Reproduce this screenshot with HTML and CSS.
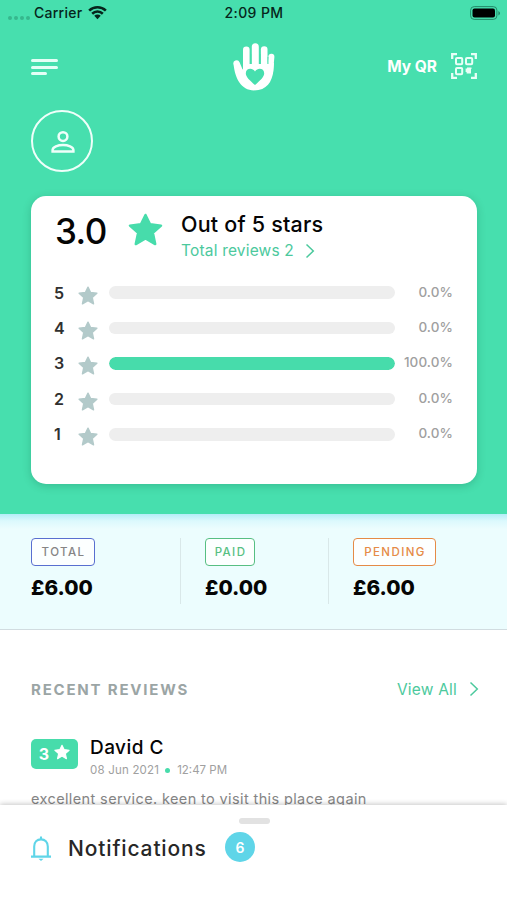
FILE: index.html
```html
<!DOCTYPE html>
<html lang="en">
<head>
<meta charset="utf-8">
<title>Reviews</title>
<link rel="stylesheet" href="styles.css">
</head>
<body>
<svg class="defs" aria-hidden="true">
  <symbol id="star" viewBox="0 0 36 34"><path d="M18 2 22.7 11.6 34 13 25.6 20.4 28 32 18 26.3 8 32 10.4 20.4 2 13 13.3 11.6Z" fill="currentColor" stroke="currentColor" stroke-width="2.5" stroke-linejoin="round"/></symbol>
  <symbol id="chevron" viewBox="0 0 10 16"><path d="M1.5 1.5 8.3 8 1.5 14.5" fill="none" stroke="currentColor" stroke-width="1.5"/></symbol>
</svg>
<main class="screen">
  <section class="hero">
    <div class="status">
      <div class="signal"><i></i><i></i><i></i><i></i></div>
      <span class="carrier">Carrier</span>
      <svg class="wifi" viewBox="0 0 20 15"><path d="M1.2 5.6a12.6 12.6 0 0 1 17.6 0M4.4 8.8a8 8 0 0 1 11.2 0" fill="none" stroke="#06251b" stroke-width="2.7"/><path d="M6.6 11a4.9 4.9 0 0 1 6.8 0L10 14.6Z" fill="#06251b"/></svg>
      <span class="time">2:09 PM</span>
      <svg class="battery" viewBox="0 0 31 14"><rect x=".6" y=".6" width="26.3" height="12.8" rx="3.6" fill="none" stroke="#238b69"/><rect x="2.5" y="2.5" width="22.5" height="9" rx="2" fill="#000"/><path d="M28.4 5v4.4q1.6-.8 1.6-2.2T28.4 5Z" fill="#238b69"/></svg>
    </div>
    <header class="header">
      <div class="menu"><i></i><i></i><i></i></div>
      <svg class="hand" viewBox="0 0 42 48">
        <g stroke="#fff" stroke-linecap="round" fill="none"><path d="M13.3 6.8V26" stroke-width="6.6"/><path d="M22.3 3.8V26" stroke-width="7"/><path d="M31.2 6.6V26" stroke-width="6.6"/><path d="M38.4 13.8 37 29" stroke-width="6"/><path d="M3.6 20.5 8 31" stroke-width="6.4"/></g>
        <path d="M.6 21.5C2 35 8 47.4 21 47.4S38.9 38.8 40.4 28L41 20 34 21H10.5V27Z" fill="#fff"/>
        <path d="M22 42C17 37.5 12.8 34 12.8 30.2 12.8 25.2 19.4 24.4 22 28.4 24.6 24.4 31.2 25.2 31.2 30.2 31.2 34 27 37.5 22 42Z" fill="#47dfae"/>
        <path d="M17.7 11V21M27.1 11V21M35 14V21" stroke="#47dfae" stroke-width=".9"/>
      </svg>
      <div class="myqr"><span class="myqr-text">My QR</span>
        <svg class="qr" viewBox="0 0 26 26" fill="none" stroke="#e9fff7"><path d="M1.2 6V1.2H6M20 1.2H24.8V6M24.8 20V24.8H20M6 24.8H1.2V20" stroke-width="2.3"/><g stroke-width="2"><rect x="5" y="5" width="6.2" height="6.2" rx="1"/><rect x="15" y="5" width="6.2" height="6.2" rx="1"/><rect x="5" y="15" width="6.2" height="6.2" rx="1"/></g><path d="M14.6 15.4H16V14.4H20.5V16H20V20.4H15.6V19H14.6Z" fill="#e9fff7" stroke="none"/></svg>
      </div>
    </header>
    <div class="avatar"><svg viewBox="0 0 24 24"><circle cx="12" cy="6.6" r="4.4"/><path d="M1.6 21.6V20C1.6 16.8 7 15 12 15S22.4 16.8 22.4 20V21.6Z"/></svg></div>
    <div class="card">
      <div class="summary">
        <span class="score">3.0</span>
        <svg class="big-star"><use href="#star"/></svg>
        <div class="summary-text">
          <div class="out-of">Out of 5 stars</div>
          <div class="total"><span>Total reviews 2</span><svg class="chevron"><use href="#chevron"/></svg></div>
        </div>
      </div>
      <div class="bars">
        <div class="row"><b>5</b><svg><use href="#star"/></svg><div class="track"></div><span>0.0%</span></div>
        <div class="row"><b>4</b><svg><use href="#star"/></svg><div class="track"></div><span>0.0%</span></div>
        <div class="row"><b>3</b><svg><use href="#star"/></svg><div class="track"><div class="fill" style="width:100%"></div></div><span>100.0%</span></div>
        <div class="row"><b>2</b><svg><use href="#star"/></svg><div class="track"></div><span>0.0%</span></div>
        <div class="row"><b>1</b><svg><use href="#star"/></svg><div class="track"></div><span>0.0%</span></div>
      </div>
    </div>
  </section>
  <section class="stats">
    <div class="stat"><span class="tag tag-total">TOTAL</span><div class="amount">£6.00</div></div>
    <div class="stat"><span class="tag tag-paid">PAID</span><div class="amount">£0.00</div></div>
    <div class="stat"><span class="tag tag-pending">PENDING</span><div class="amount">£6.00</div></div>
  </section>
  <section class="recent">
    <div class="recent-head"><h2>RECENT REVIEWS</h2><div class="view-all"><span>View All</span><svg class="chevron"><use href="#chevron"/></svg></div></div>
    <article class="review">
      <div class="badge"><span>3</span><svg><use href="#star"/></svg></div>
      <div><div class="name">David C</div><div class="meta"><span class="date">08 Jun 2021</span><i></i><span class="hour">12:47 PM</span></div></div>
    </article>
    <p class="comment">excellent service. keen to visit this place again</p>
  </section>
  <section class="sheet">
    <div class="handle"></div>
    <div class="notice">
      <svg class="bell" viewBox="0 0 20 25" fill="none" stroke="#5fd5e8" stroke-width="2.1"><path d="M0 20.6H20M3.2 20.5V10.5C3.2 6 6 3.4 10 3.4S16.8 6 16.8 10.5V20.5"/><path d="M10 .5V3"/><path d="M7.5 22.7H12.5L10 25Z" fill="#5fd5e8" stroke="none"/></svg>
      <span class="notice-text">Notifications</span>
      <span class="count">6</span>
    </div>
  </section>
</main>
</body>
</html>
```
FILE: styles.css
```css
* { box-sizing: border-box; }
body { margin: 0; background: #fff; font-family: Inter, "Liberation Sans", sans-serif; color: #050505; }
svg { display: block; flex: none; }
i { display: block; }
.defs { position: absolute; width: 0; height: 0; }
.screen { height: 900px; display: flex; flex-direction: column; overflow: hidden; white-space: nowrap; }
.hero { height: 514px; flex: none; background: #47dfae; padding: 0 31px; }
.status { height: 26px; margin: 0 -31px; padding: 0 6px 0 8px; display: grid; grid-template-columns: 26px 54px 136.5px 1fr 31px; align-items: center; color: #06251b; font-size: 14px; font-weight: 500; }
.signal { display: flex; gap: 2px; padding-top: 9px; }
.signal i { width: 4px; height: 4px; border-radius: 50%; background: #36b88d; }
.carrier { letter-spacing: .25px; margin-top: -1px; }
.time { letter-spacing: .4px; margin-top: -1px; }
.wifi { width: 19px; height: 15px; margin-top: -1px; }
.battery { width: 31px; height: 14px; }
.header { height: 82px; display: grid; grid-template-columns: 1fr 42px 1fr; align-items: center; }
.menu { display: grid; gap: 3.8px; }
.menu i { height: 3px; width: 27px; border-radius: 2px; background: #e4fff6; }
.menu i:last-child { width: 16px; }
.hand { width: 42px; height: 48px; }
.myqr { display: flex; justify-content: flex-end; align-items: center; gap: 14px; margin: -2px -1px 0 0; color: #fff; font-weight: 700; font-size: 15.5px; }
.qr { width: 26px; height: 26px; }
.avatar { width: 62px; height: 62px; margin-top: 2px; border: 2.4px solid #effffa; border-radius: 50%; display: grid; place-items: center; }
.avatar svg { width: 24px; height: 24px; margin: 2px 0 0 1px; fill: none; stroke: #effffa; stroke-width: 2.5; }
.card { height: 288px; width: 446px; margin-top: 24px; border-radius: 15px; background: #fff; box-shadow: 0 2px 9px rgba(0,70,45,.22); padding: 13px 24px 0 23px; }
.summary { display: flex; height: 66px; }
.score { width: 74px; padding-left: 1px; font-size: 35px; font-weight: 500; line-height: 44px; letter-spacing: -.6px; }
.big-star { width: 35px; height: 35px; margin-top: 3px; color: #47dcab; }
.summary-text { margin-left: 18px; }
.out-of { font-size: 21.5px; font-weight: 500; line-height: 31px; letter-spacing: .2px; }
.total { display: flex; gap: 11px; align-items: center; color: #4cc99d; font-size: 15.5px; line-height: 22px; letter-spacing: .18px; }
.chevron { width: 10px; height: 16px; }
.row { height: 35.4px; display: grid; grid-template-columns: 24px 31px 286px 1fr; align-items: center; }
.row b { font-size: 16px; font-weight: 600; color: #303030; }
.row svg { width: 20px; height: 19px; color: #b3caca; margin-top: 5px; }
.row span { text-align: right; font-size: 13.5px; font-weight: 500; letter-spacing: .1px; color: #a0a0a0; margin-top: -2px; }
.track { height: 12.5px; border-radius: 7px; background: #eee; overflow: hidden; }
.fill { height: 100%; border-radius: 7px; background: #47dcab; }
.stats { height: 116px; flex: none; background: linear-gradient(#b5edf8, #dcf9fd 7px, #ecfdfe 15px); border-bottom: 1px solid #d1dce0; padding: 24px 31px 25px; display: grid; grid-template-columns: 149px 148px 1fr; }
.stat + .stat { border-left: 1px solid #d9e8e9; padding-left: 24px; }
.tag { display: inline-flex; align-items: center; justify-content: center; height: 28px; border: 1.5px solid; border-radius: 4px; background: #fcffff; font-size: 11.5px; font-weight: 500; letter-spacing: 1.4px; padding-left: 1px; }
.tag-total { width: 64px; color: #858585; border-color: #596fd0; }
.tag-paid { width: 50px; color: #57bf83; }
.tag-pending { width: 83px; color: #e58b47; }
.amount { font-weight: 800; font-size: 20.7px; line-height: 26px; margin-top: 9px; }
.recent { height: 175px; flex: none; padding: 46px 28px 0 31px; }
.recent-head { height: 26px; display: flex; justify-content: space-between; align-items: center; }
h2 { margin: 0; color: #9ba5a5; font-size: 15px; font-weight: 700; letter-spacing: 1.8px; }
.view-all { display: flex; gap: 12px; align-items: center; color: #4cc99d; font-size: 15.5px; letter-spacing: .2px; }
.review { display: flex; gap: 12px; margin-top: 33px; }
.badge { width: 47px; height: 30px; margin-top: 4px; border-radius: 5px; background: #47dcab; color: #fff; display: flex; align-items: center; justify-content: center; gap: 5px; font-weight: 700; font-size: 16px; }
.badge svg { width: 16px; height: 16px; margin-top: -4px; }
.name { font-size: 19px; font-weight: 500; line-height: 25px; letter-spacing: .45px; }
.meta { display: flex; align-items: center; color: #a0a0a0; font-size: 11.5px; line-height: 21px; }
.meta i { width: 5px; height: 5px; margin: 0 7px 0 6px; border-radius: 50%; background: #47dcab; }
.date { letter-spacing: .2px; }
.comment { margin: 7px 0 0; color: #858585; font-size: 14.5px; line-height: 22px; letter-spacing: .38px; }
.sheet { flex: 1; background: #fff; box-shadow: 0 -1px 5px rgba(0,0,0,.22); position: relative; padding: 13px 31px 0; }
.handle { width: 31px; height: 6px; margin: 0 0 0 208px; border-radius: 3px; background: #e2e2e2; }
.notice { height: 30px; margin-top: 8px; display: flex; align-items: center; }
.bell { width: 20px; height: 25px; margin-top: 2px; }
.notice-text { width: 156px; margin: 3px 0 0 17px; font-size: 21px; font-weight: 500; letter-spacing: .85px; color: #272727; }
.count { width: 30px; height: 30px; margin-left: 1px; border-radius: 50%; background: #5fd5e8; color: #fff; display: grid; place-items: center; font-size: 14px; font-weight: 600; }
```
